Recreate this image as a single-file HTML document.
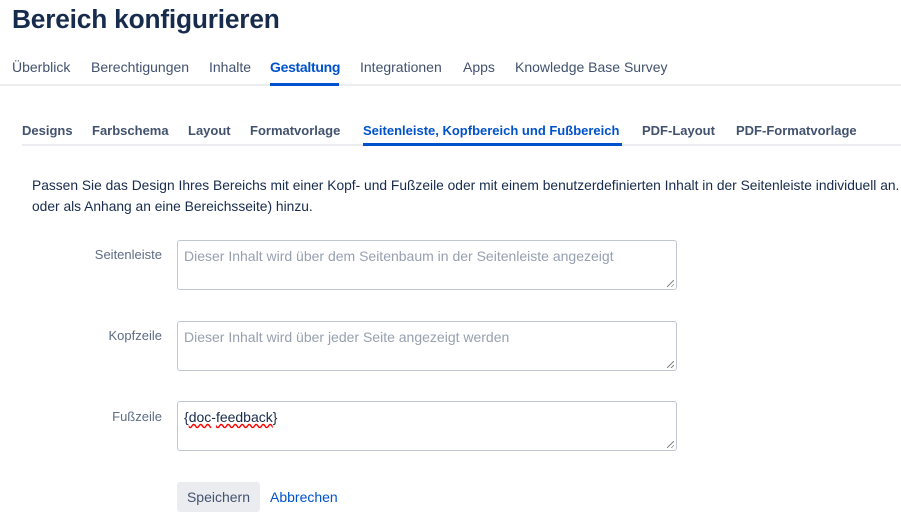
<!DOCTYPE html><html><head><style>
body{margin:0;width:901px;height:523px;overflow:hidden;background:#fff;font-family:"Liberation Sans",sans-serif;color:#172b4d;position:relative}
.a{position:absolute;white-space:nowrap}
h1{position:absolute;left:12px;top:4px;margin:0;font-size:26.3px;font-weight:bold;color:#172b4d;letter-spacing:-0.2px}
.nav span{position:absolute;top:59px;font-size:14px;color:#42526e}
.sub span{position:absolute;top:123px;font-size:13px;font-weight:bold;color:#42526e}
.ta{position:absolute;left:177px;width:498px;height:48px;border:1px solid #c1c7d0;border-radius:3px;background:#fff}
.ta span{position:absolute;left:6px;top:7px;font-size:14px;color:#97a0af}
.lab{position:absolute;font-size:13px;color:#5e6c84;right:739px}
.rz{position:absolute;right:2px;bottom:2px;width:7px;height:7px;background:linear-gradient(135deg,transparent 45%,#888 45%,#888 55%,transparent 55%,transparent 75%,#888 75%,#888 85%,transparent 85%)}
</style></head><body>
<h1>Bereich konfigurieren</h1>
<div class="nav"><span style="left:12px">Überblick</span><span style="left:91px">Berechtigungen</span><span style="left:209px">Inhalte</span><span style="left:270px;color:#0052cc;font-weight:bold;letter-spacing:-0.3px">Gestaltung</span><span style="left:360px">Integrationen</span><span style="left:463px">Apps</span><span style="left:515px">Knowledge Base Survey</span></div>
<div class="a" style="left:0;top:84px;width:901px;height:2px;background:#ebecf0"></div>
<div class="a" style="left:270px;top:83px;width:69px;height:3px;background:#0052cc"></div>
<div class="sub"><span style="left:22px">Designs</span><span style="left:92px">Farbschema</span><span style="left:188px">Layout</span><span style="left:250px">Formatvorlage</span><span style="left:363px;color:#0052cc">Seitenleiste, Kopfbereich und Fußbereich</span><span style="left:642px">PDF-Layout</span><span style="left:736px">PDF-Formatvorlage</span></div>
<div class="a" style="left:22px;top:144px;width:879px;height:2px;background:#ebecf0"></div>
<div class="a" style="left:363px;top:143px;width:259px;height:3px;background:#0052cc"></div>
<div class="a" style="left:32px;top:175px;font-size:13.8px;line-height:21px;color:#172b4d">Passen Sie das Design Ihres Bereichs mit einer Kopf- und Fußzeile oder mit einem benutzerdefinierten Inhalt in der Seitenleiste individuell an.<br>oder als Anhang an eine Bereichsseite) hinzu.</div>
<div class="lab" style="top:247px">Seitenleiste</div>
<div class="ta" style="top:240px"><span>Dieser Inhalt wird über dem Seitenbaum in der Seitenleiste angezeigt</span><div class="rz"></div></div>
<div class="lab" style="top:328px">Kopfzeile</div>
<div class="ta" style="top:321px"><span>Dieser Inhalt wird über jeder Seite angezeigt werden</span><div class="rz"></div></div>
<div class="lab" style="top:409px">Fußzeile</div>
<div class="ta" style="top:401px"><span style="color:#172b4d">{<u style="text-decoration:underline wavy red">doc</u>-<u style="text-decoration:underline wavy red">feedback</u>}</span><div class="rz"></div></div>
<div class="a" style="left:177px;top:482px;width:83px;height:30px;background:#ebecf0;border-radius:3px;font-size:14px;line-height:30px;text-align:center;color:#42526e">Speichern</div>
<div class="a" style="left:270px;top:489px;font-size:14px;color:#0052cc">Abbrechen</div>
</body></html>
